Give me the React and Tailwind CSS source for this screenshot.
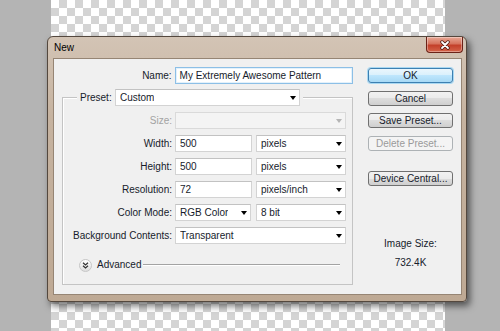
const Arrow = ({ disabled }) => (
  <span className={`ml-auto mr-[3px] w-0 h-0 border-x-[3px] border-t-[4px] border-x-transparent ${disabled ? 'border-t-[#b5b5b5]' : 'border-t-black'}`} />
);

const Select = ({ value, className = '', disabled }) => (
  <div className={`h-[17px] flex items-center pl-[4px] border ${disabled ? 'bg-[#f4f4f4] border-[#dadada]' : 'bg-white border-[#d3d3d3] border-t-[#c2c2c2]'} ${className}`}>
    <span className="truncate">{value}</span>
    <Arrow disabled={disabled} />
  </div>
);

const Input = ({ value, className = '' }) => (
  <div className={`h-[17px] flex items-center pl-[4px] bg-white border border-[#d3d3d3] border-t-[#c2c2c2] ${className}`}>{value}</div>
);

const Row = ({ label, muted, children }) => (
  <div className="flex items-center gap-[3px]">
    <span className={`w-[109px] text-right ${muted ? 'text-[#a3a3a3]' : ''}`}>{label}</span>
    {children}
  </div>
);

const Button = ({ children, primary, disabled, className = '' }) => {
  const look = primary
    ? 'border-[#3c7fb1] bg-[linear-gradient(#eaf6fd,#d9f0fc_50%,#bee6fd_50%,#a7d9f5)] shadow-[0_0_0_1px_#a8d8f2]'
    : disabled
      ? 'border-[#adb2b5] bg-[#f4f4f4] text-[#9a9a9a]'
      : 'border-[#707070] bg-[linear-gradient(#f2f2f2,#ebebeb_50%,#dddddd_50%,#cfcfcf)]';
  return (
    <div className={`w-[85px] h-[15px] flex items-center justify-center rounded-[3px] border ${look} ${className}`}>
      {children}
    </div>
  );
};

const CloseButton = () => (
  <div className="w-[37px] h-[16px] flex items-center justify-center rounded-b-[4px] border border-t-0 border-[#6b2217] bg-[linear-gradient(#e9a996,#d6735d_45%,#c3402a_55%,#d4644a)] shadow-[inset_0_0_0_1px_rgba(255,255,255,0.35)]">
    <svg width="12" height="10" viewBox="0 0 12 10">
      <path d="M3 2 L9 8 M9 2 L3 8" stroke="#4b1a12" strokeWidth="3.4" strokeLinecap="round" />
      <path d="M3 2 L9 8 M9 2 L3 8" stroke="#fff" strokeWidth="1.8" strokeLinecap="round" />
    </svg>
  </div>
);

const AdvancedToggle = () => (
  <div className="w-[13px] h-[13px] rounded-full border border-[#c6c6c6] bg-[linear-gradient(#ffffff,#dedede)] flex items-center justify-center">
    <svg width="7" height="7" viewBox="0 0 7 7">
      <path d="M1 0.8 L3.5 3 L6 0.8 M1 3.8 L3.5 6 L6 3.8" stroke="#333" strokeWidth="1.2" fill="none" />
    </svg>
  </div>
);

export default function App() {
  return (
    <div className="relative w-[500px] h-[331px] overflow-hidden bg-[#b4b4b4] text-[10px] leading-[12px] text-[#161b2b] font-['Liberation_Sans',Arial,sans-serif]">
      {/* transparent canvas */}
      <div className="absolute left-[51px] top-0 w-[394px] h-full bg-[image:conic-gradient(#d4d4d4_25%,#ffffff_0_50%,#d4d4d4_0_75%,#ffffff_0)] bg-[length:16px_16px]" />

      {/* dialog window */}
      <div className="absolute left-[47px] top-[36px] w-[420px] h-[266px] flex flex-col rounded-t-[6px] rounded-b-[4px] border border-[#54483e] bg-[linear-gradient(#d3c4b5,#c6b3a0_30%,#bea994)] shadow-[3px_4px_7px_rgba(0,0,0,0.55)]">
        <div className="h-[21px] flex items-start justify-between pl-[6px] pr-[3px] shrink-0">
          <span className="mt-[5px] text-black">New</span>
          <CloseButton />
        </div>

        <div className="flex-1 ml-[5px] mr-[4px] mb-[6px] flex border border-[#968574] bg-[#f0f0f0]">
          {/* left column */}
          <div className="w-[299px] pt-[8px] flex flex-col">
            <div className="flex items-center gap-[3px]">
              <span className="w-[118px] text-right">Name:</span>
              <div className="w-[179px] h-[17px] flex items-center pl-[4px] bg-white border border-[#8cbfe6] shadow-[inset_0_0_0_1px_#e3f1fb]">
                My Extremely Awesome Pattern
              </div>
            </div>

            <div className="ml-[8px] mt-[5px] w-[291px] flex flex-col">
              <div className="relative z-10 self-start ml-[15px] px-[3px] flex items-center gap-[3px] bg-[#f0f0f0]">
                <span className="w-[32px]">Preset:</span>
                <Select value="Custom" className="w-[185px]" />
              </div>

              <div className="-mt-[9px] border border-[#c4c4c4] shadow-[inset_1px_1px_0_#ffffff] pt-[14px] pb-[12px] flex flex-col gap-[6px]">
                <Row label="Size:" muted>
                  <Select value="" disabled className="w-[171px]" />
                </Row>
                <Row label="Width:">
                  <Input value="500" className="w-[77px]" />
                  <Select value="pixels" className="w-[90px] ml-[1px]" />
                </Row>
                <Row label="Height:">
                  <Input value="500" className="w-[77px]" />
                  <Select value="pixels" className="w-[90px] ml-[1px]" />
                </Row>
                <Row label="Resolution:">
                  <Input value="72" className="w-[77px]" />
                  <Select value="pixels/inch" className="w-[90px] ml-[1px]" />
                </Row>
                <Row label="Color Mode:">
                  <Select value="RGB Color" className="w-[76px]" />
                  <Select value="8 bit" className="w-[90px] ml-[2px]" />
                </Row>
                <Row label="Background Contents:">
                  <Select value="Transparent" className="w-[171px]" />
                </Row>

                <div className="mt-[8px] h-[14px] flex items-center ml-[16px] mr-[12px]">
                  <AdvancedToggle />
                  <span className="ml-[5px]">Advanced</span>
                  <div className="flex-1 ml-[2px] h-[2px] border-t border-[#a3a3a3] border-b border-b-white" />
                </div>
              </div>
            </div>
          </div>

          {/* right column */}
          <div className="ml-[15px] w-[85px] pt-[9px] flex flex-col items-center">
            <Button primary>OK</Button>
            <Button className="mt-[8px]">Cancel</Button>
            <Button className="mt-[7px]">Save Preset...</Button>
            <Button disabled className="mt-[8px]">Delete Preset...</Button>
            <Button className="mt-[20px]">Device Central...</Button>
            <span className="mt-[52px]">Image Size:</span>
            <span className="mt-[7px]">732.4K</span>
          </div>
        </div>
      </div>
    </div>
  );
}
